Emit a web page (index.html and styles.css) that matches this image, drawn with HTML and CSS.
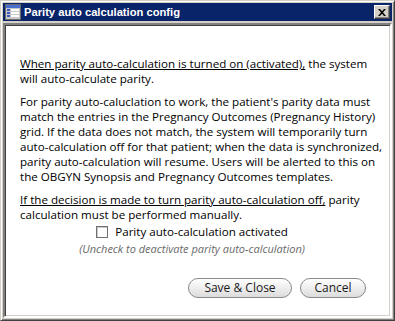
FILE: index.html
```html
<!DOCTYPE html>
<html>
<head>
<meta charset="utf-8">
<link rel="stylesheet" href="styles.css">
</head>
<body>
<div class="window">
  <div class="titlebar">
    <svg class="app-icon" width="16" height="16" viewBox="0 0 16 16">
      <rect x="0.5" y="0.5" width="15" height="15" fill="#c8c8c8" stroke="#6b6b6b"/>
      <rect x="1" y="1" width="14" height="3" fill="#4a6fd0"/>
      <rect x="2" y="5" width="3" height="2" fill="#3a5cc0"/>
      <rect x="6" y="5" width="8" height="2" fill="#ffffff"/>
      <rect x="2" y="8" width="3" height="2" fill="#3a5cc0"/>
      <rect x="6" y="8" width="8" height="2" fill="#ffffff"/>
      <rect x="2" y="11" width="3" height="2" fill="#3a5cc0"/>
      <rect x="6" y="11" width="8" height="2" fill="#ffffff"/>
    </svg>
    <span class="title">Parity auto calculation config</span>
    <span class="close-btn">
      <svg width="8" height="7" viewBox="0 0 8 7">
        <path d="M0 0h2l2 2.2L6 0h2L5 3.5 8 7H6L4 4.8 2 7H0l3-3.5z" fill="#000"/>
      </svg>
    </span>
  </div>
  <div class="content">
    <p><u>When parity auto-calculation is turned on (activated),</u> the system<br>will auto-calculate parity.</p>
    <p>For parity auto-caluclation to work, the patient's parity data must<br>match the entries in the Pregnancy Outcomes (Pregnancy History)<br>grid. If the data does not match, the system will temporarily turn<br>auto-calculation off for that patient; when the data is synchronized,<br>parity auto-calculation will resume. Users will be alerted to this on<br>the OBGYN Synopsis and Pregnancy Outcomes templates.</p>
    <p><u>If the decision is made to turn parity auto-calculation off,</u> parity<br>calculation must be performed manually.</p>
    <div class="option">
      <label class="check-row"><span class="checkbox"></span>Parity auto-calculation activated</label>
      <div class="hint">(Uncheck to deactivate parity auto-calculation)</div>
    </div>
    <div class="actions">
      <button class="btn btn-save">Save &amp; Close</button>
      <button class="btn btn-cancel">Cancel</button>
    </div>
  </div>
</div>
</body>
</html>
```

FILE: styles.css
```css
html, body {
  margin: 0;
  padding: 0;
  background: #ffffff;
}
.window {
  box-sizing: border-box;
  width: 395px;
  height: 321px;
  background: #d4d0c8;
  border: 1px solid;
  border-color: #d4d0c8 #404040 #404040 #d4d0c8;
  box-shadow: inset 1px 1px 0 #ffffff, inset -1px -1px 0 #808080;
  padding: 2px;
  display: flex;
  flex-direction: column;
}
.titlebar {
  height: 18px;
  background: #0a246a;
  display: flex;
  align-items: center;
  padding: 0 2px;
  flex-shrink: 0;
}
.app-icon {
  display: block;
  margin-right: 3px;
}
.title {
  flex: 1;
  color: #ffffff;
  font-family: "Liberation Sans", Arial, sans-serif;
  font-weight: bold;
  font-size: 11.2px;
}
.close-btn {
  box-sizing: border-box;
  width: 16px;
  height: 14px;
  background: #d4d0c8;
  border: 1px solid;
  border-color: #ffffff #404040 #404040 #ffffff;
  box-shadow: inset -1px -1px 0 #808080;
  display: flex;
  align-items: center;
  justify-content: center;
}
.close-btn svg {
  display: block;
}
.content {
  flex: 1;
  margin-top: 2px;
  background: #ffffff;
  border: 2px solid;
  border-color: #808080 #ffffff #ffffff #808080;
  box-shadow: inset 1px 1px 0 #404040, inset -1px -1px 0 #d4d0c8;
  padding: 31px 10px 0 15px;
  font-family: "Open Sans", "Noto Sans", sans-serif;
  font-size: 11.6px;
  line-height: 15px;
  color: #000000;
}
.content p {
  margin: 0 0 8px 0;
  white-space: nowrap;
}
.option {
  margin-top: -6px;
  padding-right: 16px;
  text-align: center;
}
.check-row {
  display: inline-flex;
  align-items: center;
  line-height: 16px;
}
.checkbox {
  box-sizing: border-box;
  width: 12px;
  height: 12px;
  border: 1px solid #707070;
  background: #ffffff;
  box-shadow: inset 1px 1px 0 #c8c8c8;
  margin-right: 7px;
}
.hint {
  font-style: italic;
  font-size: 11px;
  color: #6a6a6a;
  line-height: 16px;
}
.actions {
  display: flex;
  justify-content: flex-end;
  gap: 8px;
  margin-top: 21px;
  padding-right: 14px;
}
.btn {
  box-sizing: border-box;
  height: 20px;
  border: 1px solid #8a8a8a;
  border-radius: 10px;
  background: linear-gradient(#ffffff, #eeeeee 50%, #dcdcdc);
  font-family: "Open Sans", "Noto Sans", sans-serif;
  font-size: 12px;
  color: #1a1a1a;
  padding: 0;
  line-height: 18px;
}
.btn-save {
  width: 104px;
}
.btn-cancel {
  width: 66px;
}
```
